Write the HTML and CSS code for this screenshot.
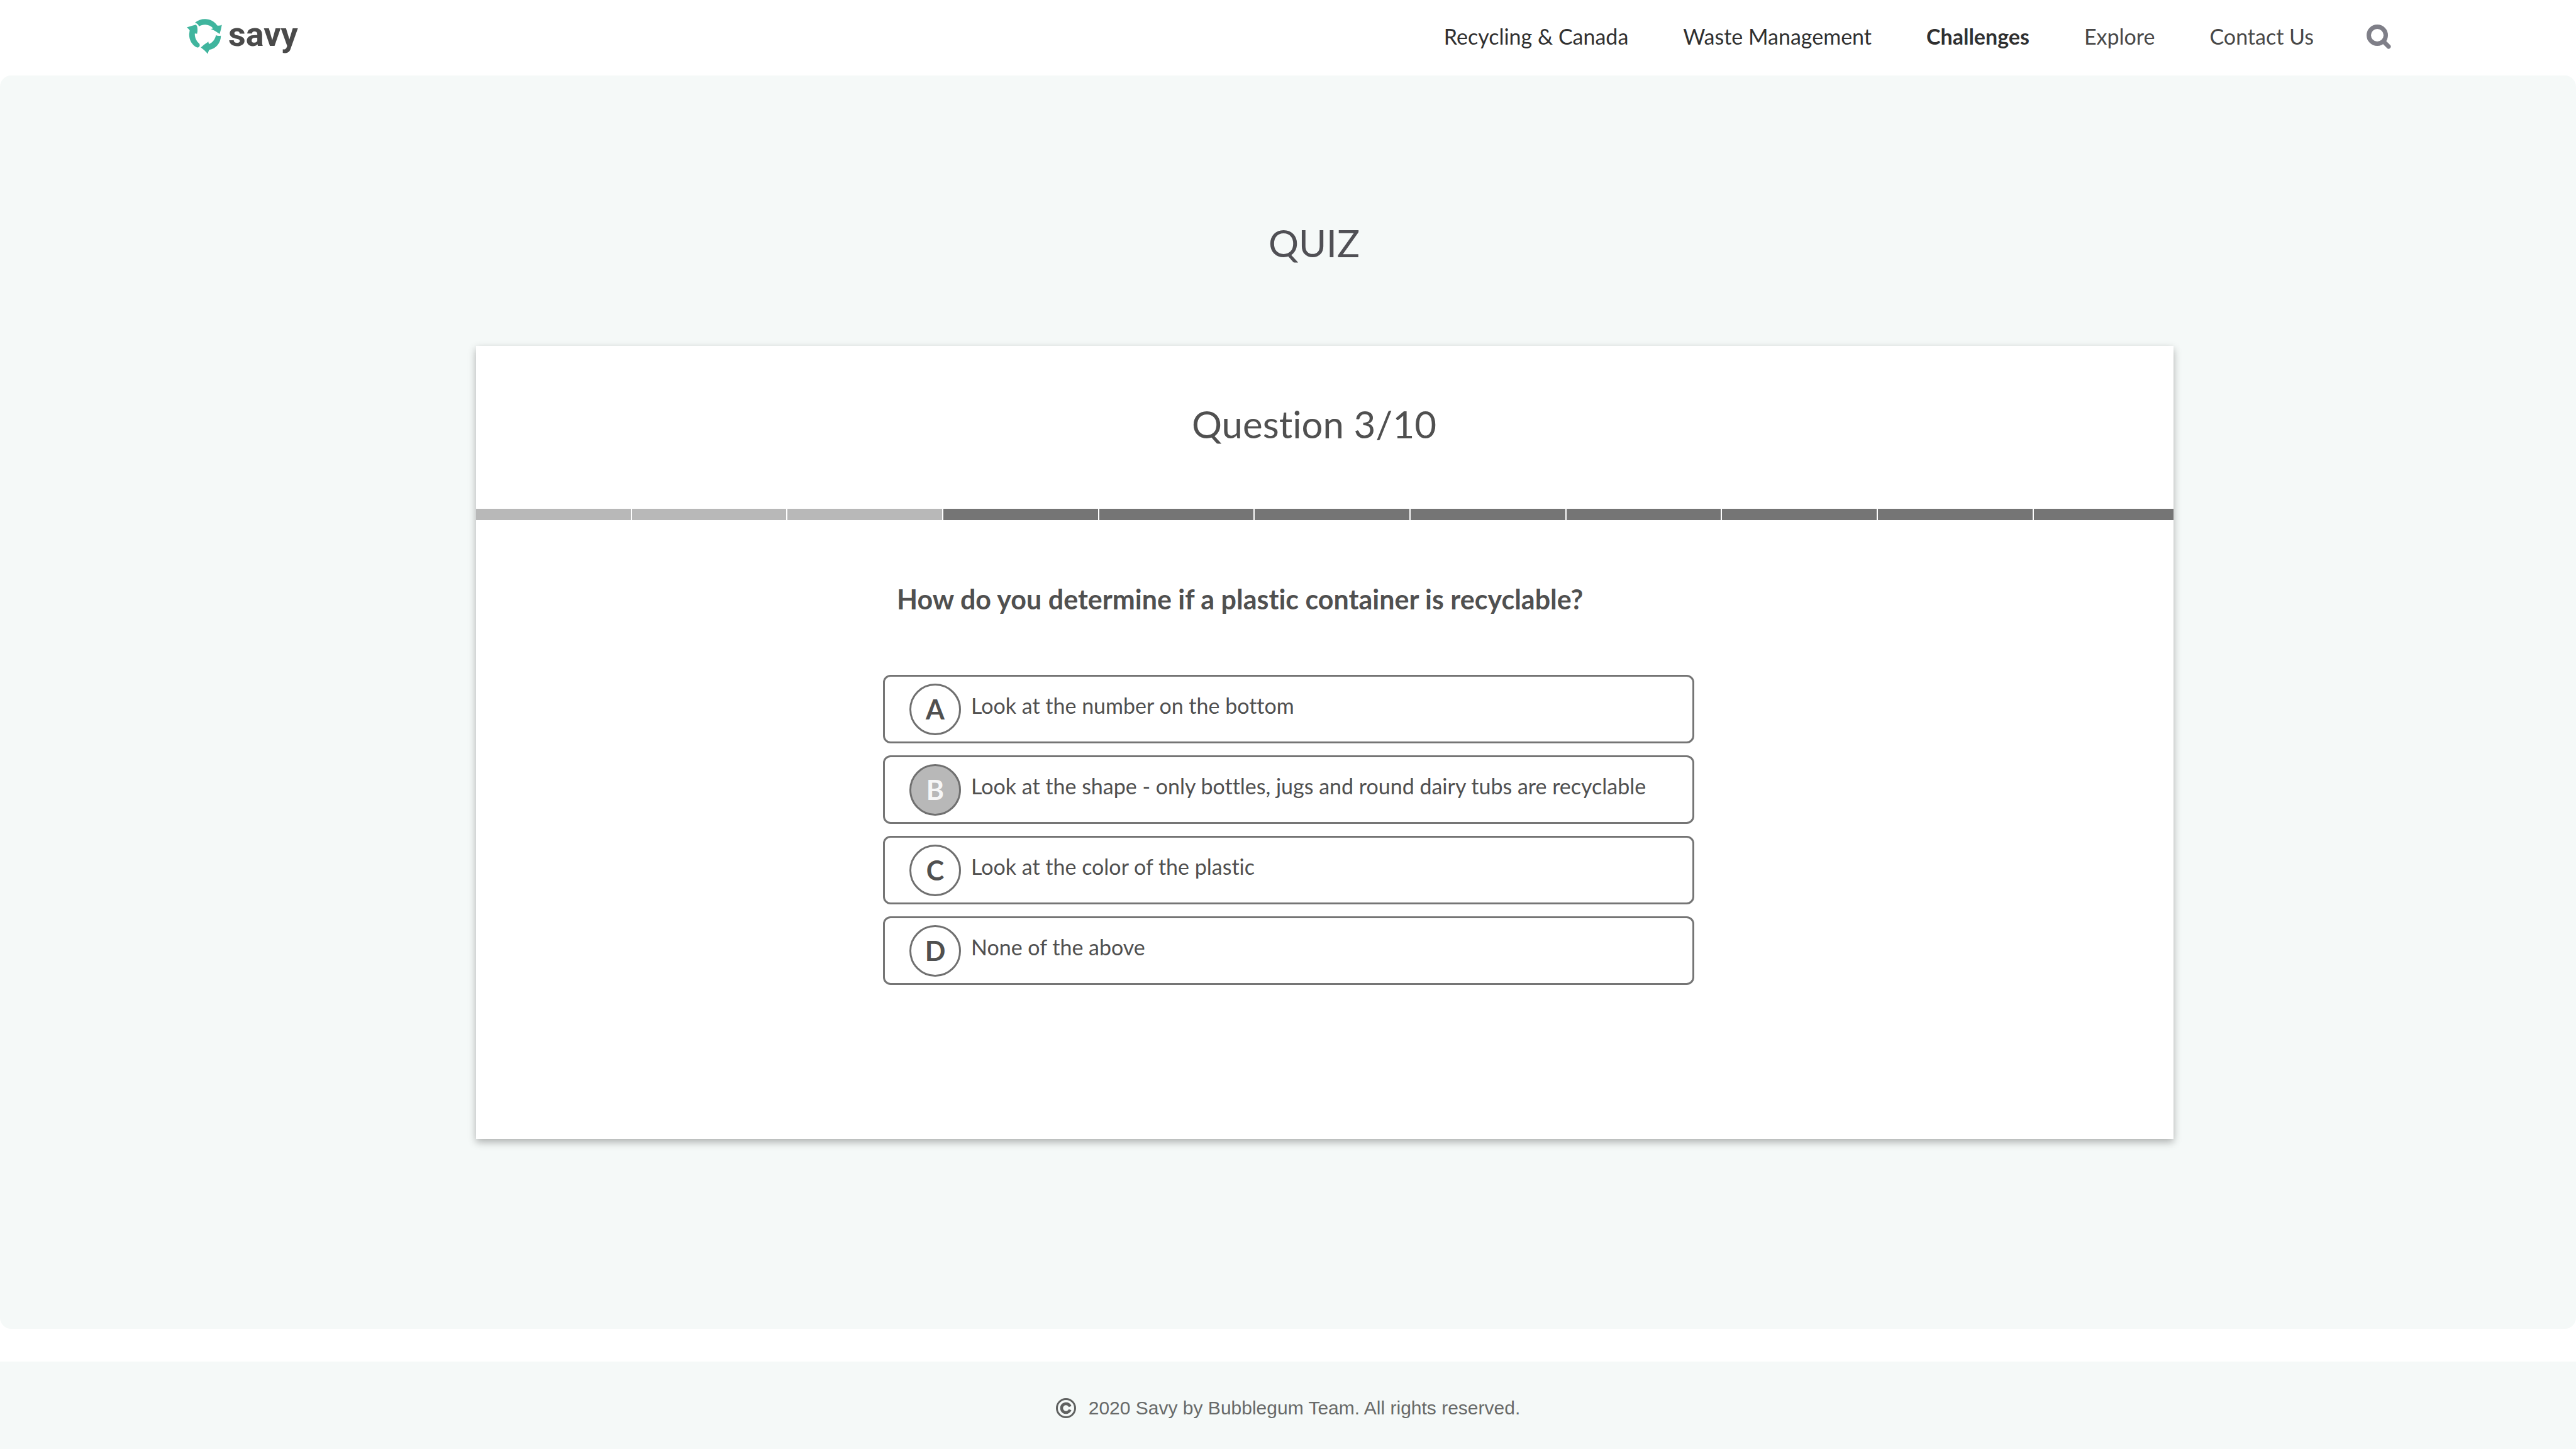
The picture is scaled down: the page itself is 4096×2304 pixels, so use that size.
FILE: index.html
```html
<!DOCTYPE html>
<html lang="en">
<head>
  <meta charset="utf-8">
  <meta name="viewport" content="width=device-width, initial-scale=1">
  <title>Savy – Quiz</title>
  <link rel="stylesheet" href="styles.css">
</head>
<body>
  <header class="header">
    <a class="logo" href="#">
      <svg class="logo-mark" viewBox="80 65 220 218" aria-hidden="true">
        <path d="M131 88C150 72 170 65 194 65C225 65 254 80 270 105Q285 108 299 101Q294 132 285 158Q256 136 229 127Q239 127 244 123C232 108 214 100 195 100C180 100 168 104 156 111Q150 94 131 88Z"/>
        <path d="M262 166Q275 173 293 169C293 214 262 252 220 257Q213 270 212 283Q192 260 168 243Q189 222 215 206Q215 214 219 221C242 211 257 192 262 166Z"/>
        <path d="M80 117Q106 108 137 100Q147 107 147 130Q148 145 144 157Q137 154 130 156C130 182 140 203 158 218C166 231 157 245 144 243C112 228 94 195 95 160L98 136Q91 125 80 117Z"/>
      </svg>
      <span class="logo-name">savy</span>
    </a>
    <nav class="nav" aria-label="Main">
      <div class="nav-links">
        <a class="nav-link" href="#">Recycling &amp; Canada</a>
        <a class="nav-link" href="#">Waste Management</a>
        <a class="nav-link nav-link-current" href="#" aria-current="page">Challenges</a>
        <a class="nav-link nav-link-soft" href="#">Explore</a>
        <a class="nav-link nav-link-soft" href="#">Contact Us</a>
      </div>
      <button class="search" type="button" aria-label="Search">
        <svg class="search-icon" viewBox="0 0 39 39" aria-hidden="true">
          <circle cx="17" cy="17" r="13.500"/>
          <path d="M28 28L35 35"/>
        </svg>
      </button>
    </nav>
  </header>

  <main class="main">
    <h1 class="title">QUIZ</h1>
    <section class="card">
      <h2 class="card-title">Question 3/10</h2>
      <div class="progress" role="img" aria-label="Question 3 of 10">
        <span class="step step-done"></span>
        <span class="step step-done"></span>
        <span class="step step-done"></span>
        <span class="step"></span>
        <span class="step"></span>
        <span class="step"></span>
        <span class="step"></span>
        <span class="step"></span>
        <span class="step"></span>
        <span class="step"></span>
        <span class="step"></span>
      </div>
      <form class="quiz">
        <h3 class="question" id="question">How do you determine if a plastic container is recyclable?</h3>
        <div class="options" role="radiogroup" aria-labelledby="question">
          <label class="option">
            <input class="option-input" type="radio" name="answer" value="a">
            <span class="option-letter">A</span>
            <span class="option-text">Look at the number on the bottom</span>
          </label>
          <label class="option">
            <input class="option-input" type="radio" name="answer" value="b" checked>
            <span class="option-letter">B</span>
            <span class="option-text">Look at the shape - only bottles, jugs and round dairy tubs are recyclable</span>
          </label>
          <label class="option">
            <input class="option-input" type="radio" name="answer" value="c">
            <span class="option-letter">C</span>
            <span class="option-text">Look at the color of the plastic</span>
          </label>
          <label class="option">
            <input class="option-input" type="radio" name="answer" value="d">
            <span class="option-letter">D</span>
            <span class="option-text">None of the above</span>
          </label>
        </div>
      </form>
    </section>
  </main>

  <footer class="footer">
    <svg class="copyright" viewBox="0 0 32 32" aria-hidden="true">
      <circle cx="16" cy="16" r="14.500" stroke-width="3"/>
      <path d="M22.500 13.500A7 7 0 1 0 22.500 18.500" stroke-width="4.500"/>
    </svg>
    <span>2020 Savy by Bubblegum Team. All rights reserved.</span>
  </footer>
</body>
</html>
```
FILE: styles.css
```css
* {
  box-sizing: border-box;
}

body {
  display: flex;
  flex-direction: column;
  min-height: 100vh;
  margin: 0;
  background: #fff;
  color: #505050;
  font-family: Lato, sans-serif;
  font-size: 34px;
  font-variant-ligatures: none;
}

.header {
  display: flex;
  align-items: center;
  justify-content: space-between;
  height: 120px;
  padding: 0 294px 4px 297px;
}

.logo {
  display: flex;
  align-items: center;
  gap: 10px;
  color: #4a4a4a;
  text-decoration: none;
}

.logo-mark {
  width: 56px;
  height: 56px;
  fill: #40b59e;
}

.logo-name {
  padding-bottom: 6px;
  font-family: Roboto, sans-serif;
  font-size: 54px;
  font-weight: 700;
  line-height: 56px;
}

.nav {
  display: flex;
  align-items: center;
  gap: 84px;
}

.nav-links {
  display: flex;
  gap: 87px;
}

.nav-link {
  color: #303030;
  line-height: 40px;
  text-decoration: none;
}

.nav-link-current {
  font-weight: 700;
}

.nav-link-soft {
  color: #484848;
}

.search {
  display: flex;
  padding: 0;
  border: 0;
  background: none;
}

.search-icon {
  width: 39px;
  height: 39px;
  fill: none;
  stroke: #7f7f88;
  stroke-width: 7;
  stroke-linecap: round;
}

.main {
  flex: 1;
  margin-bottom: 52px;
  padding: 230px 640px 0 757px;
  border-radius: 18px;
  background: #f5f9f8;
}

.title,
.card-title {
  margin: 0;
  padding-right: 34px;
  font-size: 60px;
  font-weight: 400;
  line-height: 72px;
  text-align: center;
}

.title {
  margin-bottom: 128px;
  color: #505055;
}

.card {
  padding: 88px 0 245px;
  background: #fff;
  box-shadow: 0 5px 12px rgba(0, 0, 0, 0.3);
}

.progress {
  display: grid;
  grid-template-columns: repeat(10, 21fr) 19fr;
  gap: 2px;
  height: 18px;
  margin-top: 99px;
}

.step {
  background: #757575;
}

.step-done {
  background: #b8b8b8;
}

.quiz {
  padding: 100px 762px 0 647px;
}

.question {
  margin: 0 0 94px 22px;
  font-size: 43px;
  font-weight: 700;
  line-height: 52px;
}

.options {
  display: grid;
  gap: 19px;
}

.option {
  display: grid;
  grid-template-columns: 82px 1fr;
  column-gap: 16px;
  align-items: center;
  min-height: 109px;
  padding: 0 39px;
  border: 3px solid #757575;
  border-radius: 12px;
}

.option-input {
  grid-area: 1 / 1;
  width: 82px;
  height: 82px;
  margin: 0;
  border: 3px solid #707070;
  border-radius: 50%;
  background: #fff;
  appearance: none;
}

.option-input:checked {
  background: #b8b8b8;
}

.option-letter {
  grid-area: 1 / 1;
  z-index: 1;
  font-size: 43px;
  font-weight: 700;
  line-height: 52px;
  text-align: center;
}

.option-input:checked + .option-letter {
  color: #f6f6f6;
}

.option-text {
  padding-bottom: 12px;
  line-height: 40px;
}

.footer {
  display: flex;
  align-items: center;
  justify-content: center;
  gap: 20px;
  height: 139px;
  padding-top: 8px;
  background: #f5f9f8;
  color: #686a69;
  font-family: "Liberation Sans", sans-serif;
  font-size: 30px;
}

.copyright {
  width: 32px;
  height: 32px;
  fill: none;
  stroke: #5f6160;
}
```
